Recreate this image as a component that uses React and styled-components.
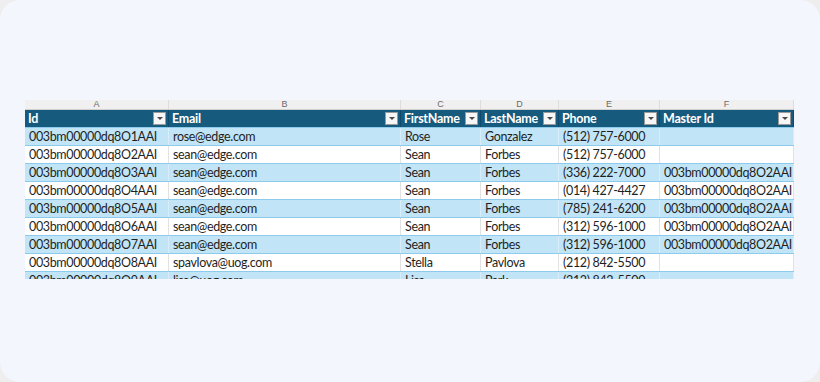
import styled, { createGlobalStyle } from "styled-components"

const columns = [
  { letter: "A", title: "Id", width: 144 },
  { letter: "B", title: "Email", width: 232 },
  { letter: "C", title: "FirstName", width: 80 },
  { letter: "D", title: "LastName", width: 78 },
  { letter: "E", title: "Phone", width: 101 },
  { letter: "F", title: "Master Id", width: 134 },
]

const rows = [
  ["003bm00000dq8O1AAI", "rose@edge.com", "Rose", "Gonzalez", "(512) 757-6000", ""],
  ["003bm00000dq8O2AAI", "sean@edge.com", "Sean", "Forbes", "(512) 757-6000", ""],
  ["003bm00000dq8O3AAI", "sean@edge.com", "Sean", "Forbes", "(336) 222-7000", "003bm00000dq8O2AAI"],
  ["003bm00000dq8O4AAI", "sean@edge.com", "Sean", "Forbes", "(014) 427-4427", "003bm00000dq8O2AAI"],
  ["003bm00000dq8O5AAI", "sean@edge.com", "Sean", "Forbes", "(785) 241-6200", "003bm00000dq8O2AAI"],
  ["003bm00000dq8O6AAI", "sean@edge.com", "Sean", "Forbes", "(312) 596-1000", "003bm00000dq8O2AAI"],
  ["003bm00000dq8O7AAI", "sean@edge.com", "Sean", "Forbes", "(312) 596-1000", "003bm00000dq8O2AAI"],
  ["003bm00000dq8O8AAI", "spavlova@uog.com", "Stella", "Pavlova", "(212) 842-5500", ""],
  ["003bm00000dq8O9AAI", "lisa@uog.com", "Lisa", "Park", "(212) 842-5500", ""],
]

const template = columns.map((c) => `${c.width}px`).join(" ")

const GlobalStyle = createGlobalStyle`
  html, body {
    margin: 0;
    background: #eeeeee;
  }
  body {
    font-family: Lato, "Liberation Sans", sans-serif;
  }
`

const Card = styled.div`
  width: 820px;
  height: 382px;
  border-radius: 20px;
  background: #f3f6fd;
  padding: 100px 0 0 25px;
  box-sizing: border-box;
  overflow: hidden;
`

const Sheet = styled.div`
  width: 769px;
  height: 179px;
  overflow: hidden;
  background: #ffffff;
`

const Row = styled.div`
  display: grid;
  grid-template-columns: ${template};
  height: ${(p) => p.$height || 18}px;
  box-sizing: border-box;
  border-bottom: 1px solid ${(p) => p.$line || "#8ccbec"};
  background: ${(p) => p.$bg || "#ffffff"};
`

const LetterCell = styled.div`
  overflow: hidden;
  border-right: 1px solid #dcdcdc;
  font-family: "Liberation Sans", sans-serif;
  font-size: 9px;
  color: #6b6b6b;
  text-align: center;
  line-height: 9px;
`

const HeadCell = styled.div`
  display: flex;
  align-items: center;
  justify-content: space-between;
  padding: 0 2px 0 3px;
  border-right: 1px solid #12496a;
  color: #ffffff;
  font-weight: 700;
  font-size: 12.5px;
  letter-spacing: -0.25px;
  overflow: hidden;
  white-space: nowrap;
`

const FilterButton = styled.span`
  flex: none;
  width: 11px;
  height: 11px;
  margin-left: 1px;
  border: 1px solid #9a9a9a;
  background: #f6f6f6;
  display: flex;
  align-items: center;
  justify-content: center;

  &::after {
    content: "";
    border-left: 3px solid transparent;
    border-right: 3px solid transparent;
    border-top: 3px solid #4a4a4a;
  }
`

const Cell = styled.div`
  padding: 0 3px 0 4px;
  display: flex;
  align-items: center;
  font-size: 12.5px;
  letter-spacing: -0.35px;
  color: #1f1f1f;
  white-space: nowrap;
  overflow: hidden;
  border-right: 1px solid ${(p) => (p.$banded ? "#d7eefa" : "#e2e2e2")};
`

const App = () => {
  return (
    <>
      <GlobalStyle />
      <Card>
        <Sheet>
          <Row $height={10} $bg="#f0f0f0" $line="#d0d0d0">
            {columns.map((c) => (
              <LetterCell key={c.letter}>{c.letter}</LetterCell>
            ))}
          </Row>
          <Row $bg="#165b7e" $line="#8ccbec">
            {columns.map((c) => (
              <HeadCell key={c.title}>
                {c.title}
                <FilterButton />
              </HeadCell>
            ))}
          </Row>
          {rows.map((row, idx) => {
            const banded = idx % 2 === 0
            return (
              <Row key={idx} $bg={banded ? "#c1e5f6" : "#ffffff"}>
                {row.map((value, i) => (
                  <Cell key={i} $banded={banded}>
                    {value}
                  </Cell>
                ))}
              </Row>
            )
          })}
        </Sheet>
      </Card>
    </>
  )
}

export default App
